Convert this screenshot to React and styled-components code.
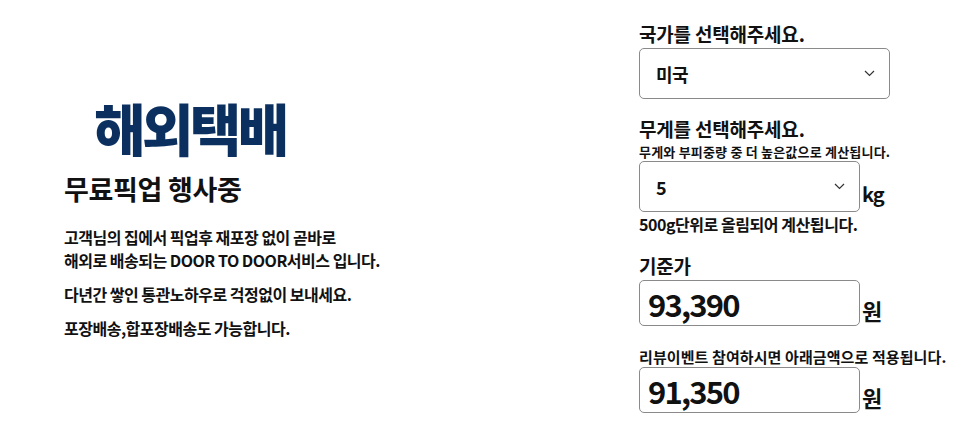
import styled, { createGlobalStyle } from "styled-components";

const GlobalStyle = createGlobalStyle`
  * { box-sizing: border-box; }
  body {
    margin: 0;
    background: #fff;
    color: #111;
    font-family: "Noto Sans CJK KR", "Noto Sans", sans-serif;
  }
`;

const Page = styled.div`
  display: flex;
  width: 966px;
  height: 428px;
`;

const Intro = styled.section`
  width: 639px;
  padding: 95px 0 0 64px;
`;

const Logo = styled.h1`
  margin: 0 0 12px 30px;
  font-size: 56px;
  line-height: 64px;
  font-weight: 900;
  letter-spacing: -3.6px;
  color: #0b2f5f;
`;

const Headline = styled.h2`
  margin: 0 0 19px;
  font-size: 27px;
  line-height: 36px;
  font-weight: 700;
  letter-spacing: -0.3px;
`;

const Para = styled.p`
  margin: 0 0 11px;
  font-size: 16px;
  line-height: 23px;
  font-weight: 700;
  letter-spacing: -0.5px;
`;

const Form = styled.section`
  padding-top: 20px;
  width: 327px;
`;

const Label = styled.div`
  font-size: 19px;
  line-height: 28px;
  font-weight: 700;
  letter-spacing: -0.2px;
  margin-top: ${(p) => p.$top || 0}px;
`;

const Note = styled.div`
  font-size: ${(p) => p.$size || 13}px;
  line-height: ${(p) => p.$line || 18}px;
  font-weight: 700;
  letter-spacing: ${(p) => p.$ls || 0}px;
`;

const Row = styled.div`
  display: flex;
  align-items: flex-end;
  gap: 2px;
  margin-bottom: ${(p) => p.$bottom || 0}px;
`;

const Box = styled.div`
  display: flex;
  align-items: center;
  justify-content: space-between;
  width: ${(p) => p.$w}px;
  height: ${(p) => p.$h || 51}px;
  border: 1px solid #8a8a8a;
  border-radius: 5px;
  padding: 0 14px 0 ${(p) => p.$pl || 16}px;
`;

const Value = styled.span`
  font-size: 18px;
  font-weight: 700;
  letter-spacing: -0.5px;
`;

const Price = styled.span`
  font-size: 31px;
  font-weight: 700;
  letter-spacing: -1.8px;
  line-height: 1;
`;

const Unit = styled.span`
  font-size: ${(p) => p.$size || 22}px;
  line-height: 24px;
  font-weight: 700;
  letter-spacing: -1px;
  margin-bottom: ${(p) => p.$mb || 4}px;
`;

const Chevron = () => (
  <svg width="11" height="7" viewBox="0 0 11 7" fill="none">
    <path d="M1 1l4.5 4.5L10 1" stroke="#333" strokeWidth="1.2" />
  </svg>
);

export default function App() {
  return (
    <>
      <GlobalStyle />
      <Page>
        <Intro>
          <Logo>해외택배</Logo>
          <Headline>무료픽업 행사중</Headline>
          <Para>
            고객님의 집에서 픽업후 재포장 없이 곧바로
            <br />
            해외로 배송되는 DOOR TO DOOR서비스 입니다.
          </Para>
          <Para>다년간 쌓인 통관노하우로 걱정없이 보내세요.</Para>
          <Para>포장배송,합포장배송도 가능합니다.</Para>
        </Intro>
        <Form>
          <Label>국가를 선택해주세요.</Label>
          <Row $bottom={16}>
            <Box $w={251}>
              <Value>미국</Value>
              <Chevron />
            </Box>
          </Row>
          <Label>무게를 선택해주세요.</Label>
          <Note $ls={0.2}>무게와 부피중량 중 더 높은값으로 계산됩니다.</Note>
          <Row>
            <Box $w={221}>
              <Value>5</Value>
              <Chevron />
            </Box>
            <Unit $size={20} $mb={6}>kg</Unit>
          </Row>
          <Note $size={16} $line={25} $ls={-0.45}>500g단위로 올림되어 계산됩니다.</Note>
          <Label $top={15}>기준가</Label>
          <Row $bottom={21}>
            <Box $w={221} $h={46} $pl={8}>
              <Price>93,390</Price>
            </Box>
            <Unit>원</Unit>
          </Row>
          <Note $size={15} $line={20} $ls={0.1}>리뷰이벤트 참여하시면 아래금액으로 적용됩니다.</Note>
          <Row>
            <Box $w={221} $h={46} $pl={8}>
              <Price>91,350</Price>
            </Box>
            <Unit>원</Unit>
          </Row>
        </Form>
      </Page>
    </>
  );
}
